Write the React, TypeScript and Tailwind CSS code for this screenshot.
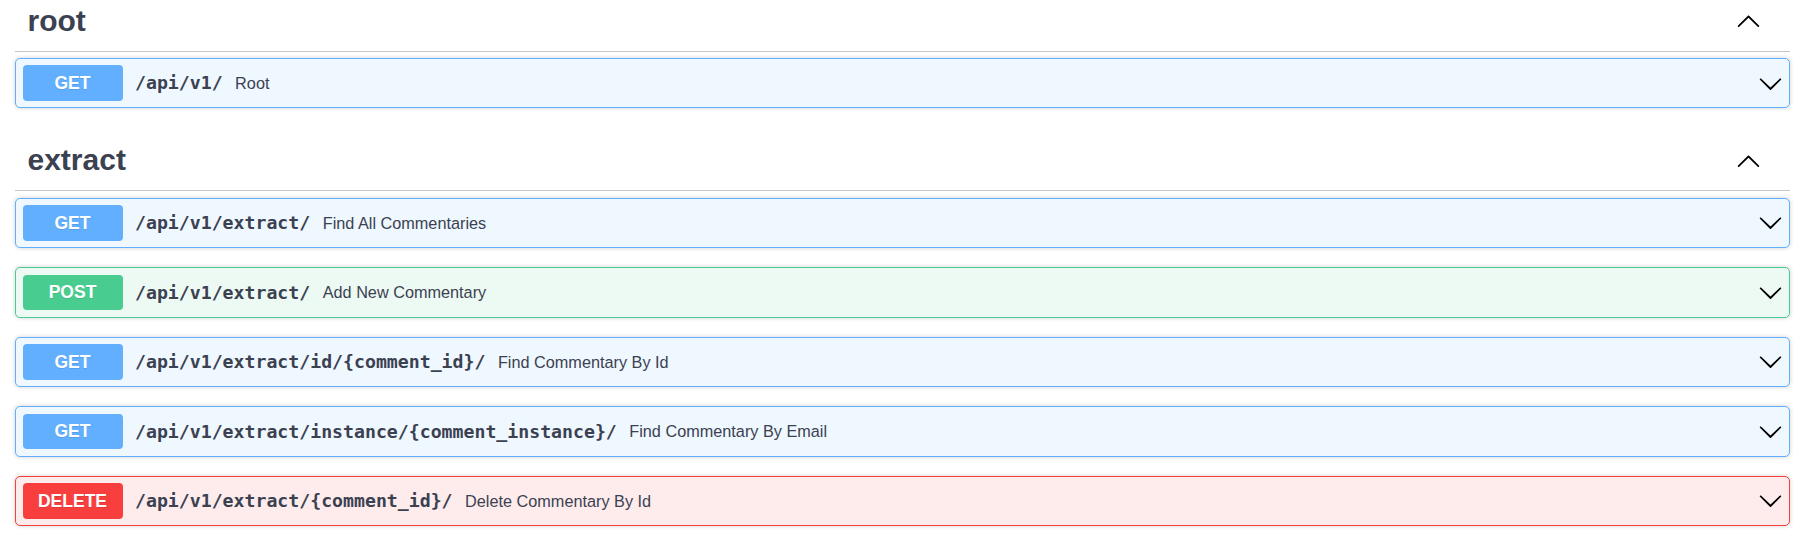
type Method = "GET" | "POST" | "DELETE";

interface Op {
  method: Method;
  path: string;
  summary: string;
}

const styles: Record<Method, { box: string; badge: string }> = {
  GET: {
    box: "border-[#61affe] bg-[#eff7ff]",
    badge: "bg-[#61affe]",
  },
  POST: {
    box: "border-[#49cc90] bg-[#edfaf4]",
    badge: "bg-[#49cc90]",
  },
  DELETE: {
    box: "border-[#f93e3e] bg-[#feecec]",
    badge: "bg-[#f93e3e]",
  },
};

const sections: { tag: string; ops: Op[] }[] = [
  {
    tag: "root",
    ops: [{ method: "GET", path: "/api/v1/", summary: "Root" }],
  },
  {
    tag: "extract",
    ops: [
      { method: "GET", path: "/api/v1/extract/", summary: "Find All Commentaries" },
      { method: "POST", path: "/api/v1/extract/", summary: "Add New Commentary" },
      {
        method: "GET",
        path: "/api/v1/extract/id/{comment_id}/",
        summary: "Find Commentary By Id",
      },
      {
        method: "GET",
        path: "/api/v1/extract/instance/{comment_instance}/",
        summary: "Find Commentary By Email",
      },
      {
        method: "DELETE",
        path: "/api/v1/extract/{comment_id}/",
        summary: "Delete Commentary By Id",
      },
    ],
  },
];

function ArrowDown() {
  return (
    <svg width="25" height="25" viewBox="0 0 20 20" className="shrink-0">
      <path
        fill="#000"
        d="M17.418 6.109c.272-.268.709-.268.979 0s.271.701 0 .969l-7.908 7.83c-.27.268-.707.268-.979 0l-7.908-7.83c-.27-.268-.27-.701 0-.969.271-.268.709-.268.979 0L10 13.25l7.418-7.141z"
      />
    </svg>
  );
}

function ArrowUp() {
  return (
    <svg width="25" height="25" viewBox="0 0 20 20" className="shrink-0">
      <path
        fill="#000"
        d="M17.418 14.908c.272.268.709.268.979 0s.271-.701 0-.969l-7.908-7.83c-.27-.268-.707-.268-.979 0l-7.908 7.83c-.27.268-.27.701 0 .969.271.268.709.268.979 0L10 7.767l7.418 7.141z"
      />
    </svg>
  );
}

function OpBlock({ op }: { op: Op }) {
  const s = styles[op.method];
  return (
    <div
      className={`mb-[18.8px] rounded-[5px] border shadow-[0_0_4px_rgba(0,0,0,0.19)] ${s.box}`}
    >
      <div className="flex items-center p-[6.5px]">
        <span
          className={`w-[100px] shrink-0 rounded-[4px] py-[7.5px] text-center font-['Liberation_Sans',Arial,sans-serif] text-[17.5px] leading-[20.7px] font-bold text-white [text-shadow:0_1px_0_rgba(0,0,0,0.1)] ${s.badge}`}
        >
          {op.method}
        </span>
        <span className="px-[12.5px] font-['DejaVu_Sans_Mono',monospace] text-[18.2px] font-bold text-[#3b4151]">
          {op.path}
        </span>
        <span className="flex-1 font-['Liberation_Sans',Arial,sans-serif] text-[16.25px] text-[#3b4151]">
          {op.summary}
        </span>
        <ArrowDown />
      </div>
    </div>
  );
}

export default function App() {
  return (
    <div className="h-[537px] overflow-hidden bg-white">
      <div className="-mt-[9px] pl-[15px] pr-[10px]">
        {sections.map((sec, idx) => (
          <section key={sec.tag} className={idx > 0 ? "pt-[3.5px]" : ""}>
            <div className="mb-[6.25px] flex items-center border-b border-[#c4c6cb] py-[12.5px] pl-[12.5px] pr-[29px]">
              <h3 className="flex-1 font-['Liberation_Sans',Arial,sans-serif] text-[30px] leading-[34.5px] font-bold text-[#3b4151]">
                {sec.tag}
              </h3>
              <ArrowUp />
            </div>
            {sec.ops.map((op, i) => (
              <OpBlock key={i} op={op} />
            ))}
          </section>
        ))}
      </div>
    </div>
  );
}
